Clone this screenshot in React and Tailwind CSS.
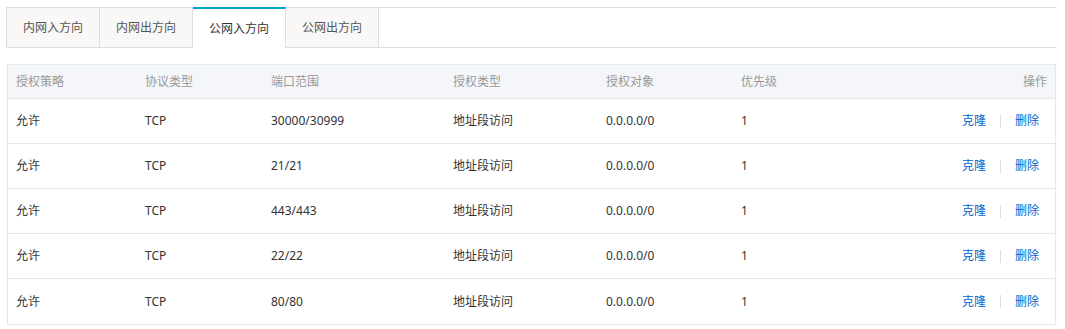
import React from "react";

const rows = [
  ["允许", "TCP", "30000/30999", "地址段访问", "0.0.0.0/0", "1"],
  ["允许", "TCP", "21/21", "地址段访问", "0.0.0.0/0", "1"],
  ["允许", "TCP", "443/443", "地址段访问", "0.0.0.0/0", "1"],
  ["允许", "TCP", "22/22", "地址段访问", "0.0.0.0/0", "1"],
  ["允许", "TCP", "80/80", "地址段访问", "0.0.0.0/0", "1"],
];

const tabs = ["内网入方向", "内网出方向", "公网入方向", "公网出方向"];

export default function App() {
  const font = { fontFamily: '"Noto Sans", "Noto Sans CJK SC", sans-serif' };
  return (
    <div className="w-[1065px] h-[329px] bg-white text-[12px]" style={font}>
      <div className="pt-[7px] pl-[6px] pr-[9px]">
        <div className="flex h-[41px] border-t border-b border-[#dddddd]">
          {tabs.map((t, i) =>
            i === 2 ? (
              <div
                key={t}
                className="w-[93px] -mt-px mb-[-1px] border-t-2 border-t-[#00a2ca] border-r border-[#dddddd] bg-white flex items-center justify-center text-[#333]"
              >
                {t}
              </div>
            ) : (
              <div
                key={t}
                className={`${i === 0 ? "w-[94px] border-l" : "w-[93px]"} border-r border-[#dddddd] bg-[#f9f8f7] flex items-center justify-center text-[#555]`}
              >
                {t}
              </div>
            )
          )}
        </div>
      </div>
      <div className="mt-[16px] ml-[7px] mr-[9px] border border-[#e3e8ee]">
        <div className="flex h-[34px] items-center bg-[#f4f6f9] border-b border-[#e3e8ee] text-[#999]">
          <div className="w-[128px] pl-[8px]">授权策略</div>
          <div className="w-[126px] pl-[9px]">协议类型</div>
          <div className="w-[182px] pl-[9px]">端口范围</div>
          <div className="w-[153px] pl-[9px]">授权类型</div>
          <div className="w-[135px] pl-[9px]">授权对象</div>
          <div className="w-[100px] pl-[9px]">优先级</div>
          <div className="flex-1 text-right pr-[8px]">操作</div>
        </div>
        {rows.map((r, idx) => (
          <div
            key={idx}
            className={`flex h-[45px] items-center text-[#333] ${idx < rows.length - 1 ? "border-b border-[#e3e8ee]" : ""}`}
          >
            <div className="w-[128px] pl-[8px]">{r[0]}</div>
            <div className="w-[126px] pl-[9px]">{r[1]}</div>
            <div className="w-[182px] pl-[9px]">{r[2]}</div>
            <div className="w-[153px] pl-[9px]">{r[3]}</div>
            <div className="w-[135px] pl-[9px]">{r[4]}</div>
            <div className="w-[100px] pl-[9px]">{r[5]}</div>
            <div className="flex-1 flex justify-end items-center pr-[16px] text-[#0066cc]">
              <span>克隆</span>
              <span className="mx-[14px] w-px h-[13px] bg-[#dddddd]"></span>
              <span>删除</span>
            </div>
          </div>
        ))}
      </div>
    </div>
  );
}
